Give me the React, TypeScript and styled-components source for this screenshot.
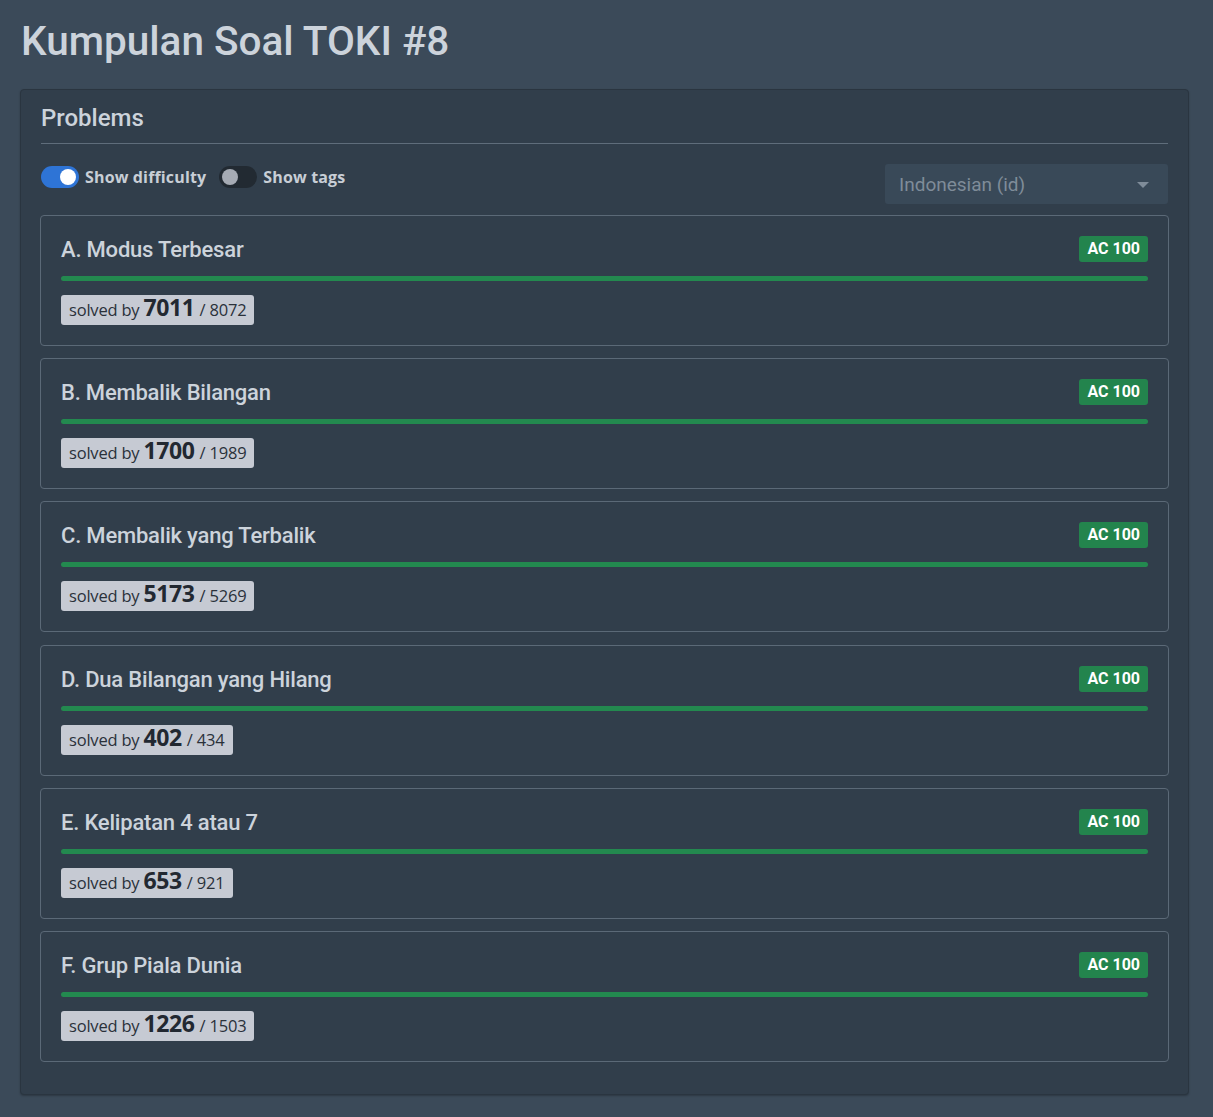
import React from "react";
import styled, { createGlobalStyle } from "styled-components";

const Global = createGlobalStyle`
  html, body { margin: 0; padding: 0; background: #3b4a59; }
  body { font-family: Roboto, "Noto Sans", sans-serif; color: #cbd2da; }
  * { box-sizing: border-box; }
`;

const Page = styled.div`
  padding: 14px 24px 22px 20px;
  min-height: 1117px;
`;

const Title = styled.h1`
  margin: 0 0 21px 1px;
  font-family: Roboto, sans-serif;
  font-weight: 500;
  font-size: 40.5px;
  line-height: 54px;
  color: #ccd3db;
`;

const Panel = styled.section`
  background: #313e4b;
  border: 1px solid #2a3540;
  border-radius: 4px;
  box-shadow: 0 1px 2px rgba(0, 0, 0, 0.25);
  padding: 13px 19px 32px 19px;
`;

const PanelTitle = styled.h2`
  margin: 0 1px;
  font-family: Roboto, sans-serif;
  font-weight: 500;
  font-size: 24px;
  line-height: 30px;
  color: #ccd3db;
  padding-bottom: 10px;
  border-bottom: 1px solid #5f6d7b;
`;

const Controls = styled.div`
  display: flex;
  align-items: center;
  justify-content: space-between;
  margin: 20px 1px 11px 1px;
`;

const Toggles = styled.div`
  display: flex;
  align-items: center;
  gap: 6px;
  margin-top: -14px;
`;

const Toggle = styled.span<{ $on: boolean }>`
  position: relative;
  width: 38px;
  height: 22px;
  border-radius: 11px;
  background: ${(p) => (p.$on ? "#2e74d6" : "#222a32")};
  flex: none;
  &::after {
    content: "";
    position: absolute;
    top: 3px;
    left: ${(p) => (p.$on ? "19px" : "3px")};
    width: 16px;
    height: 16px;
    border-radius: 50%;
    background: ${(p) => (p.$on ? "#ffffff" : "#a6abb4")};
  }
`;

const ToggleLabel = styled.span`
  font-family: "Open Sans", sans-serif;
  font-weight: 700;
  font-size: 16px;
  letter-spacing: 0.15px;
  color: #c8ced6;
  margin-right: 7px;
`;

const Select = styled.div`
  width: 283px;
  height: 40px;
  background: #394958;
  border-radius: 3px;
  display: flex;
  align-items: center;
  justify-content: space-between;
  padding: 0 19px 0 14px;
  font-family: Roboto, sans-serif;
  font-size: 19px;
  color: #7f8c99;
`;

const Caret = styled.span`
  width: 0;
  height: 0;
  border-left: 6px solid transparent;
  border-right: 6px solid transparent;
  border-top: 6px solid #7f8c99;
  margin-top: 2px;
`;

const List = styled.div`
  display: flex;
  flex-direction: column;
  gap: 12.2px;
`;

const Card = styled.div`
  border: 1px solid #5b6977;
  border-radius: 4px;
  padding: 20px 20px 19px 20px;
  height: 131px;
`;

const CardHead = styled.div`
  display: flex;
  justify-content: space-between;
  align-items: flex-start;
`;

const ProblemName = styled.div`
  font-family: Roboto, sans-serif;
  font-weight: 500;
  font-size: 22px;
  line-height: 28px;
  color: #ccd3db;
  letter-spacing: -0.2px;
`;

const Badge = styled.span`
  background: #23844d;
  color: #ffffff;
  font-family: Roboto, sans-serif;
  font-weight: 700;
  font-size: 16px;
  line-height: 26px;
  padding: 0 8px;
  border-radius: 3px;
`;

const Bar = styled.div`
  height: 5px;
  background: #23894f;
  border-radius: 3px;
  margin: 12px 0 14px 0;
`;

const Solved = styled.div`
  display: inline-block;
  height: 30px;
  background: #c6cad3;
  border-radius: 3px;
  padding: 0 8px;
  font-family: "Open Sans", sans-serif;
  font-size: 16.5px;
  letter-spacing: -0.2px;
  line-height: 30px;
  color: #2a313a;
  white-space: nowrap;
`;

const Big = styled.b`
  font-size: 23px;
  letter-spacing: -0.4px;
  line-height: 0;
  font-weight: 700;
  margin: 0 1px 0 0;
  color: #222831;
`;

const problems = [
  { name: "A. Modus Terbesar", solved: 7011, total: 8072 },
  { name: "B. Membalik Bilangan", solved: 1700, total: 1989 },
  { name: "C. Membalik yang Terbalik", solved: 5173, total: 5269 },
  { name: "D. Dua Bilangan yang Hilang", solved: 402, total: 434 },
  { name: "E. Kelipatan 4 atau 7", solved: 653, total: 921 },
  { name: "F. Grup Piala Dunia", solved: 1226, total: 1503 },
];

export default function App() {
  return (
    <>
      <Global />
      <Page>
        <Title>Kumpulan Soal TOKI #8</Title>
        <Panel>
          <PanelTitle>Problems</PanelTitle>
          <Controls>
            <Toggles>
              <Toggle $on />
              <ToggleLabel>Show difficulty</ToggleLabel>
              <Toggle $on={false} />
              <ToggleLabel>Show tags</ToggleLabel>
            </Toggles>
            <Select>
              <span>Indonesian (id)</span>
              <Caret />
            </Select>
          </Controls>
          <List>
            {problems.map((p) => (
              <Card key={p.name}>
                <CardHead>
                  <ProblemName>{p.name}</ProblemName>
                  <Badge>AC 100</Badge>
                </CardHead>
                <Bar />
                <Solved>
                  solved by <Big>{p.solved}</Big> / {p.total}
                </Solved>
              </Card>
            ))}
          </List>
        </Panel>
      </Page>
    </>
  );
}
